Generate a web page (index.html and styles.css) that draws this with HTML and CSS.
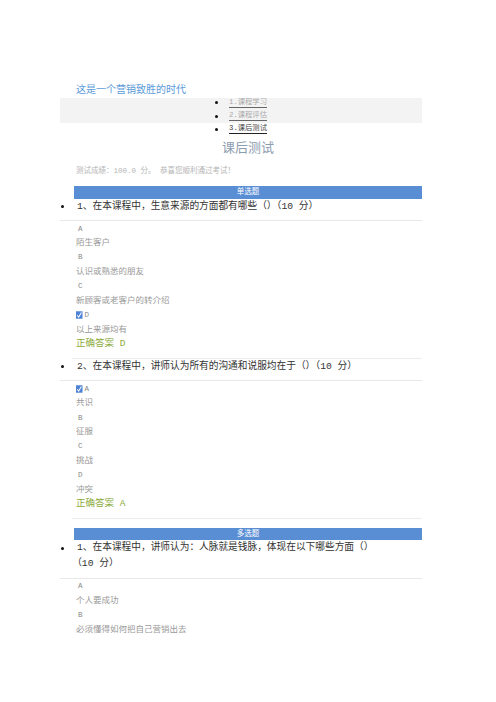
FILE: index.html
```html
<!DOCTYPE html>
<html lang="zh-CN">
<head>
    <meta charset="UTF-8">
    <meta name="viewport" content="width=device-width, initial-scale=1.0">
    <title>课后测试</title>
    <link rel="stylesheet" href="styles.css">
</head>
<body>

    <div class="page">
        <div class="site-title">这是一个营销致胜的时代</div>

        <ul class="steps">
            <li><a href="#">1.课程学习</a></li>
            <li><a href="#">2.课程评估</a></li>
            <li class="current"><a href="#">3.课后测试</a></li>
        </ul>

        <h1 class="test-title">课后测试</h1>
        <p class="score">测试成绩：100.0 分。 恭喜您顺利通过考试！</p>

        <div class="section-bar">单选题</div>
        <ul class="questions">
            <li>
                <div class="q-text"><span>1、在本课程中，生意来源的方面都有哪些（）<span class="pts">（10 分）</span></span></div>
                <div class="options">
                    <div class="opt-key">A</div>
                    <div class="opt-text">陌生客户</div>
                    <div class="opt-key">B</div>
                    <div class="opt-text">认识或熟悉的朋友</div>
                    <div class="opt-key">C</div>
                    <div class="opt-text">新顾客或老客户的转介绍</div>
                    <div class="opt-key checked"><svg class="check" viewBox="0 0 7 8"><rect width="7" height="8" fill="#4d82d6"/><path d="M1.4 4.3 L2.9 6.3 L5.8 1.4" stroke="#fff" stroke-width="1.1" fill="none"/></svg>D</div>
                    <div class="opt-text">以上来源均有</div>
                    <div class="answer">正确答案 D</div>
                </div>
            </li>
            <li>
                <div class="q-text"><span>2、在本课程中，讲师认为所有的沟通和说服均在于（）<span class="pts">（10 分）</span></span></div>
                <div class="options">
                    <div class="opt-key checked"><svg class="check" viewBox="0 0 7 8"><rect width="7" height="8" fill="#4d82d6"/><path d="M1.4 4.3 L2.9 6.3 L5.8 1.4" stroke="#fff" stroke-width="1.1" fill="none"/></svg>A</div>
                    <div class="opt-text">共识</div>
                    <div class="opt-key">B</div>
                    <div class="opt-text">征服</div>
                    <div class="opt-key">C</div>
                    <div class="opt-text">挑战</div>
                    <div class="opt-key">D</div>
                    <div class="opt-text">冲突</div>
                    <div class="answer">正确答案 A</div>
                </div>
            </li>
        </ul>

        <div class="section-bar">多选题</div>
        <ul class="questions">
            <li>
                <div class="q-text"><span>1、在本课程中，讲师认为：人脉就是钱脉，体现在以下哪些方面（）<span class="pts">（10 分）</span></span></div>
                <div class="options last">
                    <div class="opt-key">A</div>
                    <div class="opt-text">个人要成功</div>
                    <div class="opt-key">B</div>
                    <div class="opt-text">必须懂得如何把自己营销出去</div>
                </div>
            </li>
        </ul>
    </div>

</body>
</html>
```

FILE: styles.css
```css
body {
    margin: 0;
    background-color: #ffffff;
    font-family: "Liberation Mono", "Noto Sans CJK SC", monospace;
    color: #444;
}
.page {
    width: 362px;
    margin-left: 60px;
    padding-top: 86px;
}
.site-title {
    padding-left: 16px;
    font-size: 10px;
    line-height: 10px;
    color: #5b9bd8;
}

/* step navigation */
.steps {
    list-style: none;
    margin: 0;
    padding: 0 0 0 151px;
    background: linear-gradient(transparent 2px, #f3f3f3 2px, #f3f3f3 27px, transparent 27px);
}
.steps li {
    display: flex;
    align-items: center;
    height: 13.4px;
    font-size: 7.3px;
}
.steps li::before {
    content: "";
    width: 3px;
    height: 3px;
    border-radius: 50%;
    background-color: #111;
    margin: 0 11px 0 4px;
}
.steps a {
    color: #aaa;
    text-decoration: none;
    border-bottom: 1px solid #666;
    line-height: 9px;
}
.steps .current a {
    color: #444;
    border-bottom-color: #222;
}

.test-title {
    margin: 4px 0 0 14px;
    font-size: 13px;
    font-weight: normal;
    line-height: 18px;
    text-align: center;
    color: #8d9db0;
}
.score {
    margin: 7px 0 0 16px;
    font-size: 7.5px;
    line-height: 12px;
    color: #b5b5b5;
}

.section-bar {
    margin: 9px 0 0 14px;
    height: 12.5px;
    line-height: 12.5px;
    background-color: #5a8ed4;
    color: #fff;
    font-size: 7.5px;
    text-align: center;
}

/* questions */
.questions {
    list-style: none;
    margin: 0;
    padding: 0;
}
.q-text {
    display: flex;
    align-items: flex-start;
    padding: 0 10px 5.5px 0;
    border-bottom: 1px solid #e8e8e8;
    font-size: 9.7px;
    line-height: 16px;
    color: #333;
}
.q-text::before {
    content: "";
    flex: none;
    width: 3px;
    height: 3px;
    margin: 6.5px 13px 0 1px;
    border-radius: 50%;
    background-color: #111;
}
.pts {
    white-space: nowrap;
}
.options {
    margin-left: 12px;
    padding: 0.5px 0 6.5px 4px;
    border-bottom: 1px solid #ececec;
    line-height: 14.4px;
}
.options.last {
    border-bottom: none;
}
.opt-key {
    padding-left: 2px;
    font-size: 7.5px;
    color: #888;
}
.opt-key.checked {
    display: flex;
    align-items: center;
    padding-left: 0;
}
.check {
    width: 6.5px;
    height: 8px;
    margin-right: 2px;
}
.opt-text {
    font-size: 8.5px;
    color: #999;
}
.answer {
    font-size: 9.5px;
    color: #8bab3a;
}
```
